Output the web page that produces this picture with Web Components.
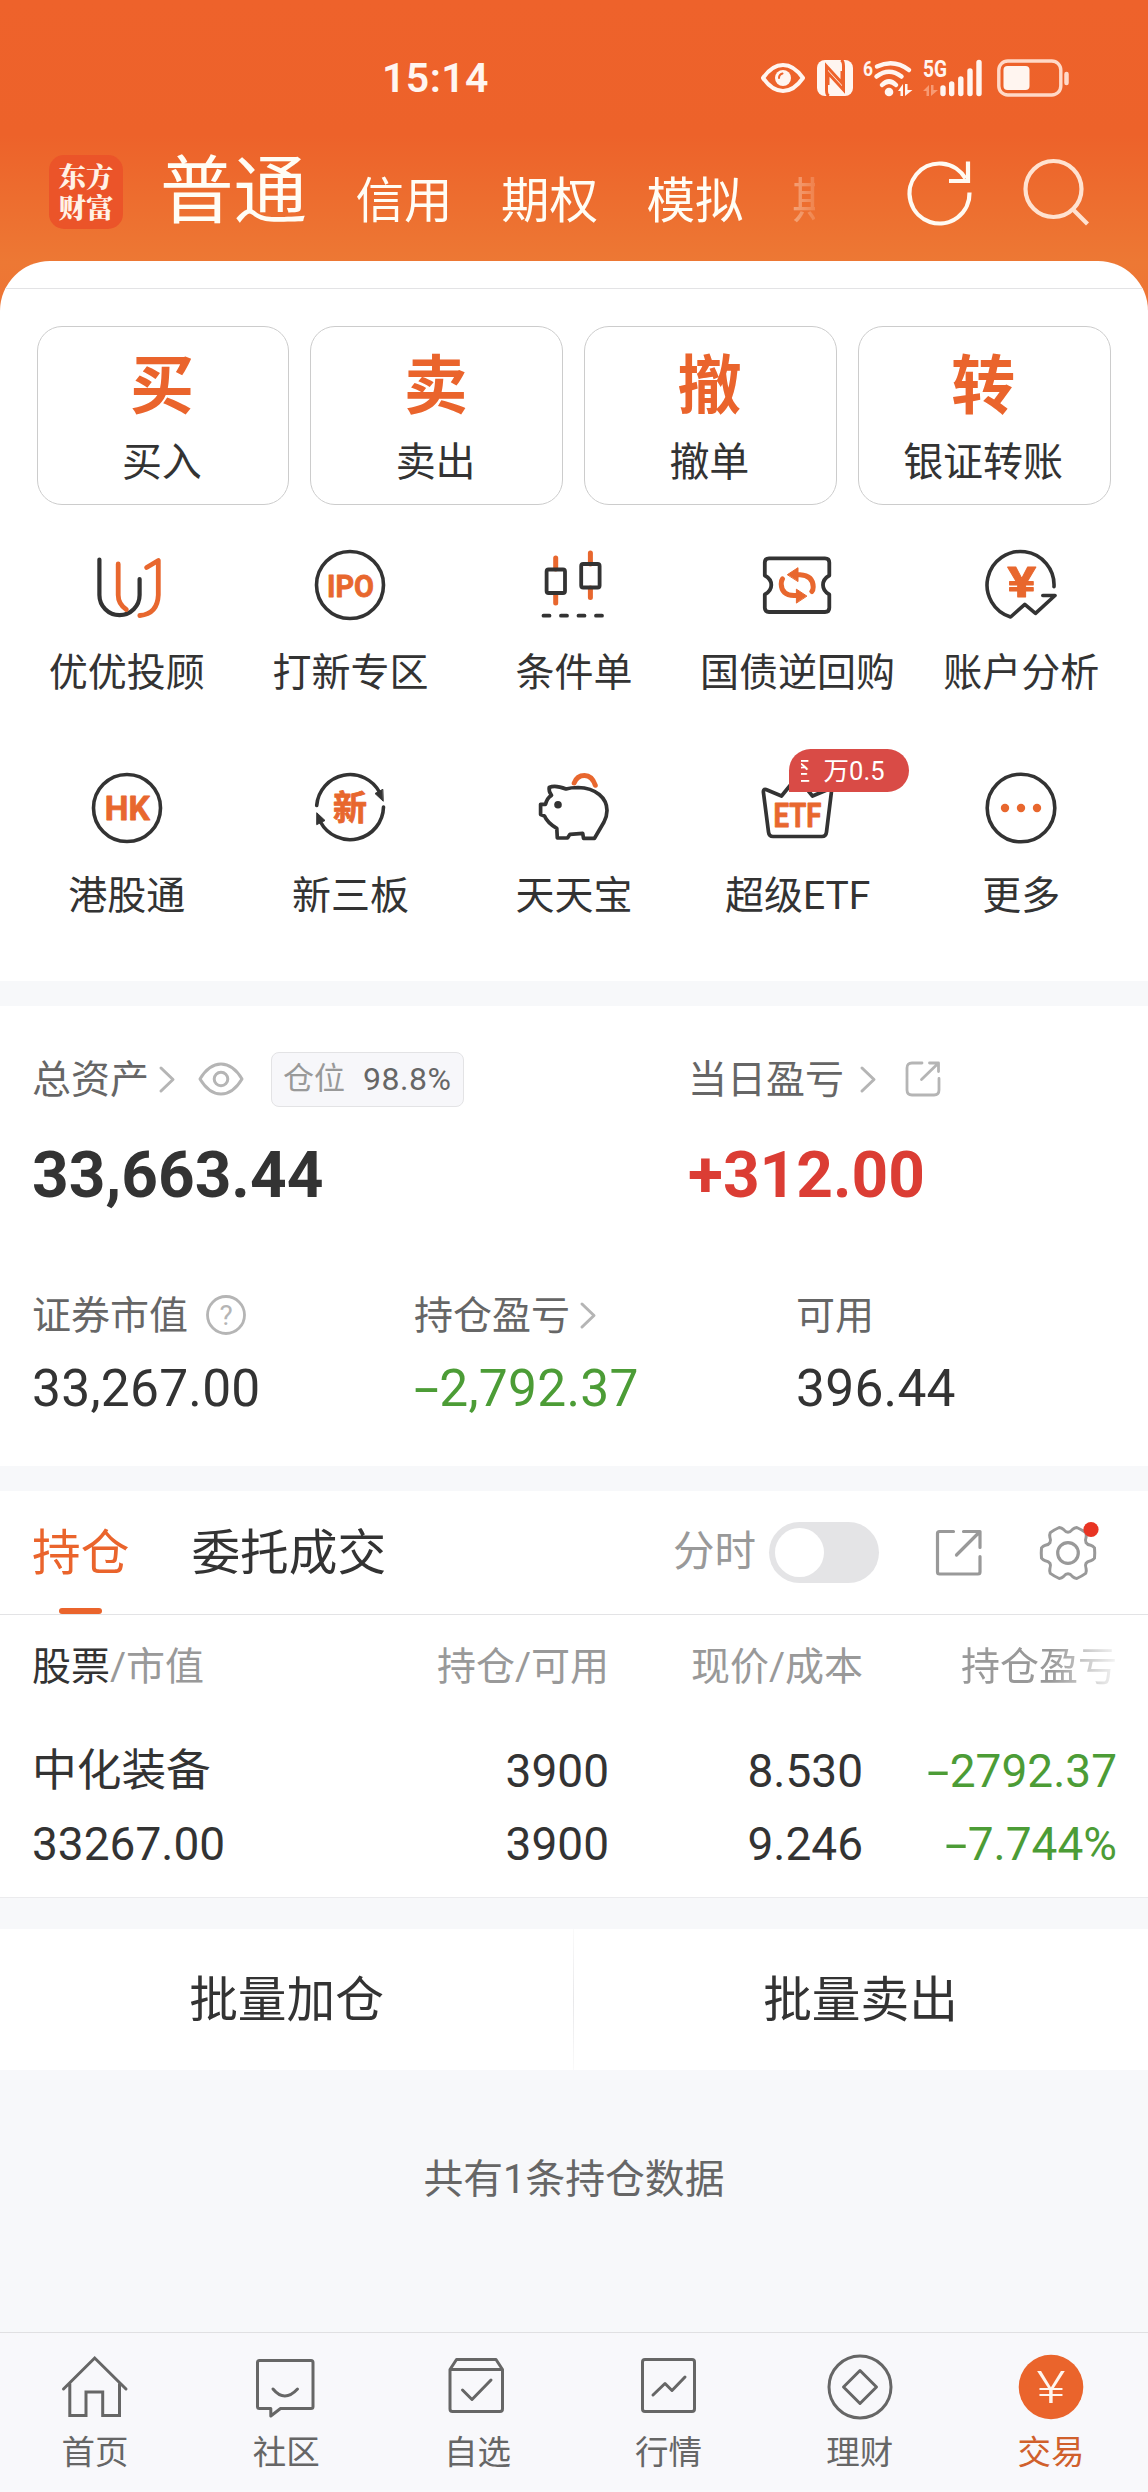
<!DOCTYPE html>
<html lang="zh-CN">
<head>
<meta charset="utf-8">
<title>交易</title>
<style>
  html, body { margin: 0; padding: 0; }
  body {
    width: 1148px;
    background: #f7f8fa;
    color: #333;
    font-family: Roboto, "Noto Sans CJK SC", sans-serif;
    --brand: #ea642c;
    --up: #db3d34;
    --down: #4c9c36;
    --muted: #999;
    --sub: #666;
    --line: #e3e3e5;
    --band: #f7f7fa;
  }
</style>
</head>
<body>
<trade-page>
  <top-area>
    <status-bar>15:14</status-bar>
    <account-nav>
      <nav-tab active>普通</nav-tab>
      <nav-tab>信用</nav-tab>
      <nav-tab>期权</nav-tab>
      <nav-tab>模拟</nav-tab>
      <nav-tab faded>期</nav-tab>
    </account-nav>
    <quick-sheet>
      <trade-action slot="actions" glyph="买">买入</trade-action>
      <trade-action slot="actions" glyph="卖">卖出</trade-action>
      <trade-action slot="actions" glyph="撤">撤单</trade-action>
      <trade-action slot="actions" glyph="转">银证转账</trade-action>
      <quick-entry icon="advisor">优优投顾</quick-entry>
      <quick-entry icon="ipo">打新专区</quick-entry>
      <quick-entry icon="candles">条件单</quick-entry>
      <quick-entry icon="repo">国债逆回购</quick-entry>
      <quick-entry icon="analysis">账户分析</quick-entry>
      <quick-entry icon="hk">港股通</quick-entry>
      <quick-entry icon="neeq">新三板</quick-entry>
      <quick-entry icon="piggy">天天宝</quick-entry>
      <quick-entry icon="etf">超级ETF<promo-badge slot="badge" lead="至">万0.5</promo-badge></quick-entry>
      <quick-entry icon="more">更多</quick-entry>
    </quick-sheet>
  </top-area>

  <asset-panel>
    <asset-metric slot="main" size="large" value="33,663.44">
      总资产
      <app-icon slot="extra" name="chevron" style="margin-left:10px"></app-icon>
      <app-icon slot="extra" name="eye" style="margin-left:23px"></app-icon>
      <position-chip slot="extra" label="仓位">98.8%</position-chip>
    </asset-metric>
    <asset-metric slot="main" size="large" tone="up" value="+312.00">
      当日盈亏
      <app-icon slot="extra" name="chevron" style="margin-left:16px"></app-icon>
      <app-icon slot="extra" name="shareSmall" style="margin-left:29px"></app-icon>
    </asset-metric>
    <asset-metric slot="sub" value="33,267.00">
      证券市值
      <app-icon slot="extra" name="help" style="margin-left:17px"></app-icon>
    </asset-metric>
    <asset-metric slot="sub" tone="down" value="-2,792.37">
      持仓盈亏
      <app-icon slot="extra" name="chevron" style="margin-left:10px"></app-icon>
    </asset-metric>
    <asset-metric slot="sub" value="396.44">可用</asset-metric>
  </asset-panel>

  <holdings-panel>
    <section-tab slot="tabs" active>持仓</section-tab>
    <section-tab slot="tabs">委托成交</section-tab>
    <toggle-switch slot="tools">分时</toggle-switch>
    <app-icon slot="tools" name="share" style="margin-left:56px"></app-icon>
    <app-icon slot="tools" name="gear" style="margin-left:57px"></app-icon>
    <holding-row name="中化装备" worth="33267.00" held="3900" usable="3900"
      price="8.530" cost="9.246" profit="-2792.37" ratio="-7.744%"></holding-row>
  </holdings-panel>

  <batch-bar>
    <span>批量加仓</span>
    <span slot="right">批量卖出</span>
  </batch-bar>
  <list-note>共有1条持仓数据</list-note>

  <tab-bar>
    <tab-item icon="home">首页</tab-item>
    <tab-item icon="community">社区</tab-item>
    <tab-item icon="watchlist">自选</tab-item>
    <tab-item icon="market">行情</tab-item>
    <tab-item icon="wealth">理财</tab-item>
    <tab-item icon="trade" active>交易</tab-item>
  </tab-bar>
</trade-page>

<script>
;(function () {
  "use strict"

  const DARK = "#333"
  const ORANGE = "#e8672e"

  // six-lobed outline with shallow hollows between the lobes
  function gearPath(c, outer, inner) {
    const at = (deg, r) => {
      const a = (deg * Math.PI) / 180
      return `${(c + r * Math.cos(a)).toFixed(1)} ${(c + r * Math.sin(a)).toFixed(1)}`
    }
    let d = `M${at(-11, outer)}`
    for (let i = 0; i < 6; i++) {
      const a = i * 60
      d += `Q${at(a, outer)} ${at(a + 11, outer)}`
      d += `Q${at(a + 16, outer - 1)} ${at(a + 19, outer - 3)}`
      d += `Q${at(a + 30, inner)} ${at(a + 41, outer - 3)}`
      d += `Q${at(a + 44, outer - 1)} ${at(a + 49, outer)}`
    }
    return d + "Z"
  }

  // name: [width, height, markup]
  const ICONS = {
    advisor: [72, 72, `
      <g stroke-width="4.2"><path stroke="${DARK}" d="M8.4 10.500V46a20 20 0 0 0 40.200 0V30"/>
      <path stroke="${ORANGE}" stroke-width="4.800" d="M27.200 15V46Q27.200 55 35.300 60.500M55.600 18.500L67.300 11.500V46Q66.500 65 48.800 66.500"/></g>`],
    ipo: [72, 72, `
      <circle cx="36" cy="36" r="33.500" stroke="${DARK}" stroke-width="3.600"/>
      <text x="36.500" y="47.500" font-size="32" textLength="47" lengthAdjust="spacingAndGlyphs">IPO</text>`],
    candles: [72, 72, `
      <path stroke="${ORANGE}" stroke-width="5" d="M17.700 9V20M17.700 45V54M52.400 4V15M52.400 39V48.500"/>
      <g stroke="${DARK}" stroke-width="3.800"><rect x="8.600" y="20.500" width="18.400" height="23.500" rx="2"/>
      <rect x="43.200" y="15" width="18.400" height="23.500" rx="2"/>
      <path d="M5.500 66.700h6M23 66.700h6M40.500 66.700h6M58 66.700h6"/></g>`],
    repo: [72, 72, `
      <path stroke="${DARK}" stroke-width="3.800" d="M7 9.300H63Q67.300 9.300 67.300 13.500V26.500Q61 30 61 36T67.300 45.500V58.700Q67.300 63 63 63H7Q2.800 63 2.800 58.700V45.500Q9.300 42 9.300 36T2.800 26.500V13.500Q2.800 9.300 7 9.300Z"/>
      <path stroke="${ORANGE}" stroke-width="5" d="M34 25.800H38Q51 26.500 51.200 38Q51.200 41 49.800 42.500M36 46.600H32Q19.500 46 19.200 35Q19.200 31.500 20.500 30"/>
      <path fill="${ORANGE}" stroke="${ORANGE}" d="M25.600 25.500L36 18.700V32.200ZM44.600 46.900L34.400 40.200V53.700Z"/>`],
    analysis: [72, 72, `
      <path stroke="${DARK}" stroke-width="3.600" d="M69 37.700A33.500 33.500 0 1 0 25.600 68L39.800 55.300L50.500 64.300L70 46.500H57.800"/>
      <text x="36.700" y="48" font-size="43" textLength="29" lengthAdjust="spacingAndGlyphs">¥</text>`],
    hk: [72, 72, `
      <circle cx="36" cy="36" r="33.500" stroke="${DARK}" stroke-width="3.600"/>
      <text x="36.300" y="48" font-size="33" textLength="45" lengthAdjust="spacingAndGlyphs">HK</text>`],
    neeq: [72, 72, `
      <path stroke="${DARK}" stroke-width="3.600" d="M2.700 33.500A33.500 33.500 0 0 1 66 21M69.500 35A33.500 33.500 0 0 1 6.500 50"/>
      <path fill="${DARK}" stroke="${DARK}" d="M69 29L61 21.500L68.500 17.500ZM3 41L11 48.500L3 52.500Z"/>
      <text x="36" y="48" font-size="34">新</text>`],
    piggy: [72, 72, `
      <path stroke="${DARK}" stroke-width="3.700" d="M13.500 23.300Q10.500 19 11.200 15.500Q17 12.500 28 17Q33 15.500 40 15.500C58 16 69 26 69 38.500Q69 44 66 50L56.500 66.300H45.500L44.700 61.300L32 62.300L29.500 66H19.300L18.800 56.300Q9.500 51 6.500 44L2.600 42.500V32.300H7.500Q9 26 13.500 23.300Z"/>
      <circle cx="20" cy="32.700" r="3.800" fill="${DARK}"/>
      <path stroke="${ORANGE}" stroke-width="5" d="M36.200 11Q39 3.500 46.500 3.500T57.300 13.300"/>`],
    etf: [72, 72, `
      <path stroke="${DARK}" stroke-width="3.700" d="M4 17.500L19.500 24L35 5L50.500 24L66 17.500Q70 17 69.300 21L64.500 60Q64 64.500 60 64.500H11Q7 64.500 6.500 60L1.500 21Q0.800 17 4 17.500Z"/>
      <text x="35.500" y="54.500" font-size="33" textLength="48" lengthAdjust="spacingAndGlyphs">ETF</text>`],
    more: [72, 72, `
      <circle cx="36" cy="36" r="33.800" stroke="${DARK}" stroke-width="3.600"/>
      <g fill="${ORANGE}"><circle cx="20" cy="36" r="4.200"/><circle cx="36" cy="36" r="4.200"/><circle cx="52" cy="36" r="4.200"/></g>`],
    chevron: [16, 28, `<path stroke="#b5b5b5" stroke-width="3" d="M2 3L14 14.500L2 26"/>`],
    eye: [46, 36, `
      <g stroke="#b5b5b5" stroke-width="3"><path d="M2 18Q11 3 23 3T44 18Q35 33 23 33T2 18Z"/>
      <circle cx="23" cy="18" r="6.800"/></g>`],
    help: [42, 42, `
      <circle cx="21" cy="21" r="18.500" stroke="#b5b5b5" stroke-width="2.800"/>
      <text x="21" y="31" font-size="28" style="fill:#b5b5b5;font-weight:400;stroke:none">?</text>`],
    shareSmall: [36, 36, `
      <path stroke="#b5b5b5" stroke-width="2.800" d="M17 2H7Q2 2 2 7V29Q2 34 7 34H29Q34 34 34 29V17.500M24.500 2H33.500V10.500M33 2.500L16.500 18.500"/>`],
    share: [48, 50, `
      <path stroke="#999" stroke-width="3.200" d="M18.500 3.500H4.500Q2.500 3.500 2.500 5.500V44Q2.500 46 4.500 46H43Q45 46 45 44V28.500M28.500 3.500H45V19.500M44.500 4L21.500 27"/>`],
    gear: [56, 56, `
      <path stroke="#999" stroke-width="3" d="${gearPath(28, 27, 18)}"/>
      <circle cx="28" cy="28" r="10.300" stroke="#999" stroke-width="3.200"/>
      <circle cx="51" cy="4.500" r="7.600" fill="#e83423"/>`],
    refresh: [68, 68, `
      <path stroke="#fffaf2" stroke-width="4.200" stroke-linecap="butt" stroke-linejoin="miter" d="M64.500 34.500A30 30 0 1 1 60.500 20.500M63 3.500V23H44"/>`],
    search: [68, 68, `
      <g stroke="#ffe2d0" stroke-width="4.200" stroke-linecap="butt"><circle cx="31.500" cy="31" r="28"/><path d="M50 50.500L65.500 66"/></g>`],
    statusEye: [44, 30, `
      <path stroke="#fff5f0" stroke-width="4" d="M2 15Q11 2 22 2T42 15Q33 28 22 28T2 15Z"/>
      <circle cx="22" cy="15" r="8" fill="#fff5f0"/><path stroke="#ee622b" stroke-width="2" d="M18 15Q18 11.500 21.500 10.500"/>`],
    nfc: [36, 36, `
      <rect width="36" height="36" rx="8" fill="#fff5f0"/>
      <path stroke="#ee622b" stroke-width="3" stroke-linecap="butt" stroke-linejoin="miter" d="M12 36Q9.500 35 9.500 30V6L25 23V11M24 0Q26.500 1 26.500 6V30L11 13V25"/>`],
    wifi: [50, 40, `
      <text x="5" y="18" font-size="21" style="fill:#fff5f0;font-weight:700;stroke:none" textLength="10" lengthAdjust="spacingAndGlyphs">6</text>
      <g stroke="#fff5f0" stroke-width="4.500"><path d="M14 8.500Q31 0.500 46 12M13.500 18.500Q26 9 38.500 18.500M19 27Q26 20 33 27"/></g>
      <circle cx="26" cy="34" r="4.300" fill="#fff5f0"/>
      <path fill="#fff5f0" d="M35 33L40 26V38H37.500V33ZM42 26V38L49.500 32H44.500V26Z"/>`],
    signal: [62, 40, `
      <text x="12" y="18.500" font-size="24" style="fill:#fff5f0;font-weight:700;stroke:none" textLength="24" lengthAdjust="spacingAndGlyphs">5G</text>
      <path fill="#f79a73" d="M0 33L6 27V38H3.500V33ZM8 27V38L15 32H10.500V27Z"/>
      <path stroke="#fff5f0" stroke-width="5.400" d="M20 30V35.500M28.700 26V35.500M37.800 21V35.500M47 13V35.500M56 4.500V35.500"/>`],
    battery: [74, 38, `
      <rect x="1.800" y="2" width="62" height="34" rx="9" stroke="#ffd9c8" stroke-width="3.400"/>
      <rect x="6.500" y="7" width="26" height="24" rx="4" fill="#fff5f0"/>
      <path stroke="#ffd9c8" stroke-width="4.500" d="M69.500 15V24"/>`],
    home: [68, 68, `
      <path stroke="#666" stroke-width="3" stroke-linejoin="miter" d="M2.500 36L33.700 5L65 36M8.800 31V62.500H25V39H41.700V62.500H58.500V31"/>`],
    community: [68, 68, `
      <path stroke="#666" stroke-width="3" d="M7.500 7.500H59Q61 7.500 61 9.500V53.500Q61 55.500 59 55.500H28.500L18.800 63V55.500H7.500Q5.500 55.500 5.500 53.500V9.500Q5.500 7.500 7.500 7.500ZM21 36Q32.500 50 45.500 36"/>`],
    watchlist: [68, 68, `
      <path stroke="#666" stroke-width="3" d="M7 16.500L13.500 6.500H53L59.500 16.500V56Q59.500 58.500 57 58.500H9.500Q7 58.500 7 56ZM7 16.500H59.500M19.500 37L29 46.500L48 27"/>`],
    market: [68, 68, `
      <g stroke="#666" stroke-width="3"><rect x="7.500" y="6.500" width="52" height="52" rx="2.500"/>
      <path d="M18 42L30 30.500L37 37.500L50 24"/></g>`],
    wealth: [68, 68, `
      <g stroke="#666" stroke-width="3"><circle cx="34" cy="34" r="31"/>
      <path d="M34 17.500L50.500 34L34 50.500L17.500 34Z"/></g>`],
    trade: [68, 68, `
      <circle cx="34" cy="34" r="32.300" fill="#ea642c"/>
      <text x="34" y="50" font-size="44" textLength="29" lengthAdjust="spacingAndGlyphs"
        style="fill:#fff5ee;font-weight:300;stroke:none">¥</text>`],
  }

  /* Attaches the shadow root and fills it from a template string */
  class BaseElement extends HTMLElement {
    constructor() {
      super()
      this.attachShadow({ mode: "open" })
    }
    connectedCallback() {
      const template = document.createElement("template")
      template.innerHTML = this.render()
      this.shadowRoot.replaceChildren(template.content.cloneNode(true))
    }
    attr(name) {
      return this.getAttribute(name) || ""
    }
  }

  /* The sign of a loss is drawn as wide as a digit */
  const SIGN_STYLE = `
    .sign { display: inline-block; width: .49em; transform: scaleX(1.75); transform-origin: 0 50%; }
  `
  function amount(text) {
    return text.replace(/^-/, `<span class="sign">-</span>`)
  }

  class AppIcon extends BaseElement {
    render() {
      const [w, h, body] = ICONS[this.attr("name")]
      return `<style>
        :host { display: block; flex: none; width: ${w}px; height: ${h}px; }
        svg { display: block; overflow: visible; }
        text { fill: ${ORANGE}; font-weight: 700; text-anchor: middle; stroke: ${ORANGE}; stroke-width: .8px; }
      </style>
      <svg width="${w}" height="${h}" viewBox="0 0 ${w} ${h}" fill="none"
        stroke-linecap="round" stroke-linejoin="round">${body}</svg>`
    }
  }

  class TradePage extends BaseElement {
    render() {
      return `<style>
        :host { display: flex; flex-direction: column; height: 2492px; }
      </style><slot></slot>`
    }
  }

  class TopArea extends BaseElement {
    render() {
      return `<style>
        :host {
          display: block;
          background: linear-gradient(#ee622b 0, #ed622a 135px, #ed7834 262px, #ee7434 310px, #fff 311px);
        }
      </style><slot></slot>`
    }
  }

  class StatusBar extends BaseElement {
    render() {
      return `<style>
        :host {
          display: flex; align-items: center; box-sizing: border-box;
          height: 150px; padding: 6px 77px 0 382px; color: #fff5f0;
        }
        .time { flex: 1; font-size: 41px; font-weight: 600; letter-spacing: .4px; }
        .icons { display: flex; align-items: center; }
      </style>
      <span class="time"><slot></slot></span>
      <div class="icons">
        <app-icon name="statusEye"></app-icon>
        <app-icon name="nfc" style="margin-left:12px"></app-icon>
        <app-icon name="wifi" style="margin-left:10px"></app-icon>
        <app-icon name="signal" style="margin-left:10px"></app-icon>
        <app-icon name="battery" style="margin-left:12px"></app-icon>
      </div>`
    }
  }

  class AccountNav extends BaseElement {
    render() {
      return `<style>
        :host {
          display: flex; align-items: center; box-sizing: border-box;
          height: 111px; padding: 0 58px 28px 49px;
        }
        .logo {
          flex: none; box-sizing: border-box; width: 74px; height: 74px; padding-top: 5px;
          border-radius: 15px; background: #eb5429; color: #fff2e6; text-align: center;
          font: 900 27.500px/31px "Noto Serif CJK SC", "Noto Sans CJK SC", serif;
        }
        .tabs {
          display: flex; align-items: flex-start; flex: none; overflow: hidden; box-sizing: border-box;
          width: 694px; height: 106px; padding: 7px 0 0 37px;
        }
      </style>
      <div class="logo">东方<br>财富</div>
      <div class="tabs"><slot></slot></div>
      <app-icon name="refresh" style="margin:1px 0 0 88px"></app-icon>
      <app-icon name="search" style="margin-left:auto"></app-icon>`
    }
  }

  class NavTab extends BaseElement {
    render() {
      return `<style>
        :host {
          display: block; flex: none; margin: 10px 48.500px 0 0;
          font-size: 48.500px; line-height: 92px; color: #fffdf5;
        }
        :host([active]) { margin-top: 0; font-size: 73.500px; }
        :host([faded]) {
          overflow: hidden; width: 23px; margin-right: 0; opacity: .38;
          -webkit-mask: linear-gradient(90deg, #000, rgba(0, 0, 0, .4));
          mask: linear-gradient(90deg, #000, rgba(0, 0, 0, .4));
        }
      </style><slot></slot>`
    }
  }

  class QuickSheet extends BaseElement {
    render() {
      return `<style>
        :host {
          display: block; overflow: hidden; box-sizing: border-box;
          height: 720px; padding-top: 27px;
          border-radius: 50px 50px 0 0; background: #fff;
        }
        .actions {
          display: grid; grid-template-columns: repeat(4, 1fr); gap: 21px;
          padding: 37px 37.500px 0 36.500px; border-top: 1px solid var(--line);
        }
        .entries {
          display: grid; grid-template-columns: repeat(5, 1fr); row-gap: 76px;
          padding: 44px 15px 0;
        }
      </style>
      <div class="actions"><slot name="actions"></slot></div>
      <div class="entries"><slot></slot></div>`
    }
  }

  class TradeAction extends BaseElement {
    render() {
      return `<style>
        :host {
          display: flex; flex-direction: column; align-items: center; box-sizing: border-box;
          height: 179px; padding: 24px 2px 0 0;
          border: 1px solid #ccc; border-radius: 25px;
        }
        b { font-size: 64px; line-height: 72px; color: var(--brand); }
        span { margin-top: 15px; font-size: 40px; line-height: 50px; }
      </style>
      <b>${this.attr("glyph")}</b><span><slot></slot></span>`
    }
  }

  class QuickEntry extends BaseElement {
    render() {
      return `<style>
        :host { display: flex; flex-direction: column; align-items: center; height: 147px; }
        .icon { position: relative; }
        .label { margin-top: 26.500px; font-size: 39px; line-height: 50px; white-space: nowrap; }
        ::slotted([slot="badge"]) { position: absolute; left: 27px; top: -23px; }
      </style>
      <div class="icon"><app-icon name="${this.attr("icon")}"></app-icon><slot name="badge"></slot></div>
      <div class="label"><slot></slot></div>`
    }
  }

  class PromoBadge extends BaseElement {
    render() {
      return `<style>
        :host {
          display: flex; align-items: center; box-sizing: border-box;
          width: 120px; height: 43px; padding: 1px 0 0 12px;
          border-radius: 22px 22px 22px 0; background: #d94b46; color: #fff;
          font-size: 25.500px; line-height: 42px; white-space: nowrap;
        }
        /* the ticker text has half scrolled out on the left */
        .lead { display: flex; justify-content: flex-end; overflow: hidden; width: 10px; margin-right: 13px; }
      </style>
      <span class="lead">${this.attr("lead")}</span><slot></slot>`
    }
  }

  class AssetPanel extends BaseElement {
    render() {
      return `<style>
        :host {
          display: block; box-sizing: border-box; height: 460px;
          margin-top: 25px; padding: 45px 32px 0; background: #fff;
        }
        .main { display: grid; grid-template-columns: 656px 1fr; }
        .sub { display: grid; grid-template-columns: 382px 382px 1fr; margin-top: 76px; }
      </style>
      <div class="main"><slot name="main"></slot></div>
      <div class="sub"><slot name="sub"></slot></div>`
    }
  }

  class AssetMetric extends BaseElement {
    render() {
      return `<style>
        :host { display: block; }
        .label {
          display: flex; align-items: center; height: 56px;
          font-size: 39px; line-height: 54px; color: var(--sub); white-space: nowrap;
        }
        .label span { padding-top: 2px; }
        .value { margin-top: 16px; font-size: 51.500px; line-height: 60px; letter-spacing: .25px; }
        :host([size="large"]) .value {
          margin-top: 34px; font-size: 64px; line-height: 70px; font-weight: 700; letter-spacing: 0;
        }
        :host([tone="up"]) .value { color: var(--up); }
        :host([tone="down"]) .value { color: var(--down); }
        ${SIGN_STYLE}
      </style>
      <div class="label"><span><slot></slot></span><slot name="extra"></slot></div>
      <div class="value">${amount(this.attr("value"))}</div>`
    }
  }

  class PositionChip extends BaseElement {
    render() {
      return `<style>
        :host {
          display: flex; align-items: center; box-sizing: border-box;
          width: 193px; height: 55px; margin-left: 27px; padding-left: 11px;
          border: 1px solid var(--line); border-radius: 8px; background: #f7f7fa;
          font-size: 32px; letter-spacing: .5px; color: var(--sub);
        }
        span { margin-right: 18px; font-size: 31px; letter-spacing: 0; color: var(--muted); }
      </style><span>${this.attr("label")}</span><slot></slot>`
    }
  }

  class HoldingsPanel extends BaseElement {
    render() {
      return `<style>
        :host {
          display: block; box-sizing: border-box; height: 407px;
          margin-top: 25px; border-bottom: 1px solid #ebebed; background: #fff;
        }
        .bar {
          display: flex; align-items: stretch; justify-content: space-between;
          height: 123px; padding: 0 52px 0 32px; border-bottom: 1px solid var(--line);
        }
        .tabs { display: flex; gap: 62px; }
        .tools { display: flex; align-items: center; }
        .head, .body { padding: 0 31px 0 32px; }
        .head {
          display: grid; grid-template-columns: 377px 200px 254px 254px;
          padding-top: 26.500px; font-size: 39px; line-height: 50px; color: var(--muted);
          text-align: right;
        }
        .head :first-child { text-align: left; }
        .head b { font-weight: 400; color: #333; }
        .fade {
          -webkit-mask: linear-gradient(90deg, #000 74%, rgba(0, 0, 0, .1));
          mask: linear-gradient(90deg, #000 74%, rgba(0, 0, 0, .1));
        }
      </style>
      <div class="bar">
        <div class="tabs"><slot name="tabs"></slot></div>
        <div class="tools"><slot name="tools"></slot></div>
      </div>
      <div class="head">
        <span><b>股票</b>/市值</span><span>持仓/可用</span><span>现价/成本</span><span class="fade">持仓盈亏</span>
      </div>
      <div class="body"><slot></slot></div>`
    }
  }

  class SectionTab extends BaseElement {
    render() {
      return `<style>
        :host {
          display: flex; flex-direction: column; align-items: center; justify-content: space-between;
          font-size: 48.700px; line-height: 126px;
        }
        :host([active]) { color: var(--brand); }
        .text { height: 117px; }
        i { display: none; width: 43px; height: 6px; border-radius: 3px; background: var(--brand); }
        :host([active]) i { display: block; }
      </style><span class="text"><slot></slot></span><i></i>`
    }
  }

  class ToggleSwitch extends BaseElement {
    render() {
      return `<style>
        :host { display: flex; align-items: center; font-size: 41.500px; line-height: 58px; color: var(--muted); }
        .text { padding-bottom: 2px; }
        .track {
          display: flex; align-items: center; box-sizing: border-box;
          width: 110px; height: 61px; margin-left: 13px; padding-left: 6px;
          border-radius: 31px; background: #e4e4e6;
        }
        .knob { width: 49px; height: 49px; border-radius: 50%; background: #fff; }
      </style><span class="text"><slot></slot></span><div class="track"><div class="knob"></div></div>`
    }
  }

  class HoldingRow extends BaseElement {
    render() {
      const cell = (a, b, cls = "") =>
        `<div class="${cls}"><div>${amount(this.attr(a))}</div><div>${amount(this.attr(b))}</div></div>`
      return `<style>
        :host {
          display: grid; grid-template-columns: 377px 200px 254px 254px;
          padding-top: 49px; font-size: 46px; line-height: 60px; text-align: right;
        }
        :host > div, div > div { white-space: nowrap; }
        div > div + div { margin-top: 13px; }
        .name { text-align: left; }
        .name > :first-child { font-size: 44.700px; }
        .down { color: var(--down); }
        ${SIGN_STYLE}
        .sign { text-align: left; }
      </style>
      ${cell("name", "worth", "name")}${cell("held", "usable")}
      ${cell("price", "cost")}${cell("profit", "ratio", "down")}`
    }
  }

  class BatchBar extends BaseElement {
    render() {
      return `<style>
        :host {
          display: grid; grid-template-columns: 573px 1px 573px; height: 141px;
          margin-top: 31px; background: #fff;
          font-size: 48.700px; line-height: 144px; text-align: center;
        }
        i { height: 141px; background: linear-gradient(#fafafa, #e8e8ea, #fafafa); }
      </style><slot></slot><i></i><slot name="right"></slot>`
    }
  }

  class ListNote extends BaseElement {
    render() {
      return `<style>
        :host {
          display: block; margin-top: 85px;
          font-size: 39.800px; line-height: 50px; text-align: center; color: var(--sub);
        }
      </style><slot></slot>`
    }
  }

  class TabBar extends BaseElement {
    render() {
      return `<style>
        :host {
          display: grid; grid-template-columns: repeat(6, 1fr); box-sizing: border-box;
          height: 160px; margin-top: auto; padding: 20px 1px 0 0;
          border-top: 1px solid #e0e0e2; background: #f8f8fb;
        }
      </style><slot></slot>`
    }
  }

  class TabItem extends BaseElement {
    render() {
      return `<style>
        :host {
          display: flex; flex-direction: column; align-items: center; padding-right: 1px;
          font-size: 33.500px; line-height: 40px; color: var(--sub);
        }
        :host([active]) { color: #d0602c; }
        span { margin-top: 11.500px; }
      </style>
      <app-icon name="${this.attr("icon")}"></app-icon><span><slot></slot></span>`
    }
  }

  customElements.define("app-icon", AppIcon)
  customElements.define("trade-page", TradePage)
  customElements.define("top-area", TopArea)
  customElements.define("status-bar", StatusBar)
  customElements.define("account-nav", AccountNav)
  customElements.define("nav-tab", NavTab)
  customElements.define("quick-sheet", QuickSheet)
  customElements.define("trade-action", TradeAction)
  customElements.define("quick-entry", QuickEntry)
  customElements.define("promo-badge", PromoBadge)
  customElements.define("asset-panel", AssetPanel)
  customElements.define("asset-metric", AssetMetric)
  customElements.define("position-chip", PositionChip)
  customElements.define("holdings-panel", HoldingsPanel)
  customElements.define("section-tab", SectionTab)
  customElements.define("toggle-switch", ToggleSwitch)
  customElements.define("holding-row", HoldingRow)
  customElements.define("batch-bar", BatchBar)
  customElements.define("list-note", ListNote)
  customElements.define("tab-bar", TabBar)
  customElements.define("tab-item", TabItem)
})()
</script>
</body>
</html>
